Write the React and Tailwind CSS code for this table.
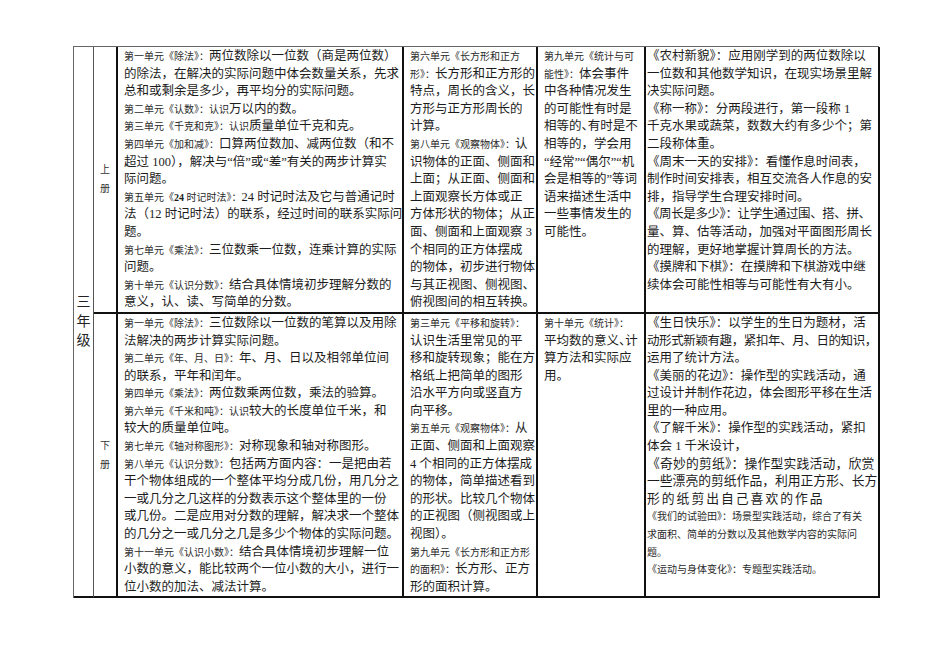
// ── Helpers ───────────────────────────────────────────────────────────────

// small prefix (unit title), bold digit inside a small prefix, half-width punctuation
const S = (t) => ({ t, kind: 'small' });
const B = (t) => ({ t, kind: 'bold' });
const H = (t) => ({ t, kind: 'half' });
// a line with its own class (tight tracking etc.)
const L = (cls, ...parts) => ({ cls, parts });

function Line({ line }) {
  const parts = Array.isArray(line) ? line : line.parts;
  const cls = Array.isArray(line) ? '' : line.cls;
  return (
    <div className={'whitespace-nowrap ' + cls}>
      {parts.map((p, i) => {
        if (typeof p === 'string') return <span key={i}>{p}</span>;
        if (p.kind === 'half') return <span key={i} className="[font-feature-settings:'halt']">{p.t}</span>;
        return (
          <span
            key={i}
            className={p.kind === 'bold' ? 'text-[10px] leading-none font-bold' : 'text-[10px] leading-none tracking-normal text-[#2a2a2a]'}
          >
            {p.t}
          </span>
        );
      })}
    </div>
  );
}

function Cell({ lines, className }) {
  return (
    <div className={'border-r-2 border-b-2 border-[#111] pt-[1px] ' + (className || 'pl-[6px]')}>
      {lines.map((l, i) => <Line key={i} line={l} />)}
    </div>
  );
}

// ── Data ──────────────────────────────────────────────────────────────────

const TOP = [
  [
    [S('第一单元《除法》：'), '两位数除以一位数（商是两位数）'],
    ['的除法，在解决的实际问题中体会数量关系，先求'],
    ['总和或剩余是多少，再平均分的实际问题。'],
    [S('第二单元《认数》：认识'), '万以内的数。'],
    [S('第三单元《千克和克》：认识'), '质量单位千克和克。'],
    [S('第四单元《加和减》：'), '口算两位数加、减两位数（和不'],
    ['超过 100），解决与“倍”或“差”有关的两步计算实'],
    ['际问题。'],
    [S('第五单元《'), B('24'), S(' 时记时法》：'), '24 时记时法及它与普通记时'],
    ['法（12 时记时法）的联系，经过时间的联系实际问'],
    ['题。'],
    [S('第七单元《乘法》：'), '三位数乘一位数，连乘计算的实际'],
    ['问题。'],
    [S('第十单元《认识分数》：'), '结合具体情境初步理解分数的'],
    ['意义，认、读、写简单的分数。'],
  ],
  [
    [S('第六单元《长方形和正方')],
    [S('形》：'), '长方形和正方形的'],
    ['特点，周长的含义，长'],
    ['方形与正方形周长的'],
    ['计算。'],
    [S('第八单元《观察物体》：'), '认'],
    ['识物体的正面、侧面和'],
    ['上面；从正面、侧面和'],
    ['上面观察长方体或正'],
    ['方体形状的物体；从正'],
    ['面、侧面和上面观察 3'],
    ['个相同的正方体摆成'],
    ['的物体，初步进行物体'],
    ['与其正视图、侧视图、'],
    ['俯视图间的相互转换。'],
  ],
  [
    [S('第九单元《统计与可')],
    [S('能性》：'), '体会事件'],
    ['中各种情况发生'],
    ['的可能性有时是'],
    ['相等的', H('、'), '有时是不'],
    ['相等的，学会用'],
    ['“经常”“偶尔”“机'],
    ['会是相等的”等词'],
    ['语来描述生活中'],
    ['一些事情发生的'],
    ['可能性。'],
  ],
  [
    ['《农村新貌》：应用刚学到的两位数除以'],
    ['一位数和其他数学知识，在现实场景里解'],
    ['决实际问题。'],
    ['《称一称》：分两段进行，第一段称 1'],
    ['千克水果或蔬菜，数数大约有多少个；第'],
    ['二段称体重。'],
    ['《周末一天的安排》：看懂作息时间表，'],
    ['制作时间安排表，相互交流各人作息的安'],
    ['排，指导学生合理安排时间。'],
    L('tracking-[-0.4px]', '《周长是多少》：让学生通过围、搭、拼、'),
    ['量、算、估等活动，加强对平面图形周长'],
    ['的理解，更好地掌握计算周长的方法。'],
    ['《摸牌和下棋》：在摸牌和下棋游戏中继'],
    ['续体会可能性相等与可能性有大有小。'],
  ],
];

const BOTTOM = [
  [
    [S('第一单元《除法》：'), '三位数除以一位数的笔算以及用除'],
    ['法解决的两步计算实际问题。'],
    [S('第二单元《年、月、日》：'), '年、月、日以及相邻单位间'],
    ['的联系，平年和闰年。'],
    [S('第四单元《乘法》：'), '两位数乘两位数，乘法的验算。'],
    [S('第六单元《千米和吨》：认识'), '较大的长度单位千米，和'],
    ['较大的质量单位吨。'],
    [S('第七单元《轴对称图形》：'), '对称现象和轴对称图形。'],
    [S('第八单元《认识分数》：'), '包括两方面内容：一是把由若'],
    ['干个物体组成的一个整体平均分成几份，用几分之'],
    ['一或几分之几这样的分数表示这个整体里的一份'],
    ['或几份。二是应用对分数的理解，解决求一个整体'],
    ['的几分之一或几分之几是多少个物体的实际问题。'],
    [S('第十一单元《认识小数》：'), '结合具体情境初步理解一位'],
    ['小数的意义，能比较两个一位小数的大小，进行一'],
    ['位小数的加法、减法计算。'],
  ],
  [
    [S('第三单元《平移和旋转》：')],
    ['认识生活里常见的平'],
    ['移和旋转现象；能在方'],
    ['格纸上把简单的图形'],
    ['沿水平方向或竖直方'],
    ['向平移。'],
    [S('第五单元《观察物体》：'), '从'],
    ['正面、侧面和上面观察'],
    ['4 个相同的正方体摆成'],
    ['的物体，简单描述看到'],
    ['的形状。比较几个物体'],
    ['的正视图（侧视图或上'],
    ['视图）。'],
    [S('第九单元《长方形和正方形')],
    [S('的面积》：'), '长方形、正方'],
    ['形的面积计算。'],
  ],
  [
    [S('第十单元《统计》：')],
    ['平均数的意义', H('、'), '计'],
    ['算方法和实际应'],
    ['用。'],
  ],
  [
    ['《生日快乐》：以学生的生日为题材，活'],
    L('tracking-[-0.4px]', '动形式新颖有趣，紧扣年、月、日的知识，'),
    ['运用了统计方法。'],
    ['《美丽的花边》：操作型的实践活动，通'],
    ['过设计并制作花边，体会图形平移在生活'],
    ['里的一种应用。'],
    ['《了解千米》：操作型的实践活动，紧扣'],
    ['体会 1 千米设计，'],
    L('text-[12.8px] tracking-[0.2px]', '《奇妙的剪纸》：操作型实践活动，欣赏'),
    L('text-[12.8px]', '一些漂亮的剪纸作品，利用正方形、长方'),
    L('text-[12.8px] tracking-[2px]', '形的纸剪出自己喜欢的作品'),
    [S('《我们的试验田》：场景型实践活动，综合了有关')],
    [S('求面积、简单的分数以及其他数学内容的实际问')],
    [S('题。')],
    [S('《运动与身体变化》：专题型实践活动。')],
  ],
];

// ── Page ──────────────────────────────────────────────────────────────────

function Volume({ label }) {
  return (
    <div className="flex flex-col items-center justify-center border-r-2 border-b-2 border-[#111] text-[10px] leading-[19px] text-[#333]">
      <span>{label}</span>
      <span>册</span>
    </div>
  );
}

export default function App() {
  return (
    <div className="min-h-screen bg-white pl-[73px] pt-[46px] font-['Liberation_Serif','Noto_Sans_CJK_SC',serif] text-[12.5px] leading-[17.6px] text-[#1c1c1c]">
      <div className="grid w-[806px] grid-cols-[20px_24px_286px_134px_108px_234px] border-l border-t border-[#666]">
        <div className="row-span-2 flex flex-col items-center justify-center border-r border-b-2 border-r-[#555] border-b-[#111] text-[14px] leading-[19.5px] text-[#222]">
          <span>三</span>
          <span>年</span>
          <span>级</span>
        </div>

        <Volume label="上" />
        <Cell lines={TOP[0]} />
        <Cell lines={TOP[1]} />
        <Cell lines={TOP[2]} />
        <Cell lines={TOP[3]} className="pl-[1px]" />

        <Volume label="下" />
        <Cell lines={BOTTOM[0]} />
        <Cell lines={BOTTOM[1]} />
        <Cell lines={BOTTOM[2]} />
        <Cell lines={BOTTOM[3]} className="pl-[1px]" />
      </div>
    </div>
  );
}
